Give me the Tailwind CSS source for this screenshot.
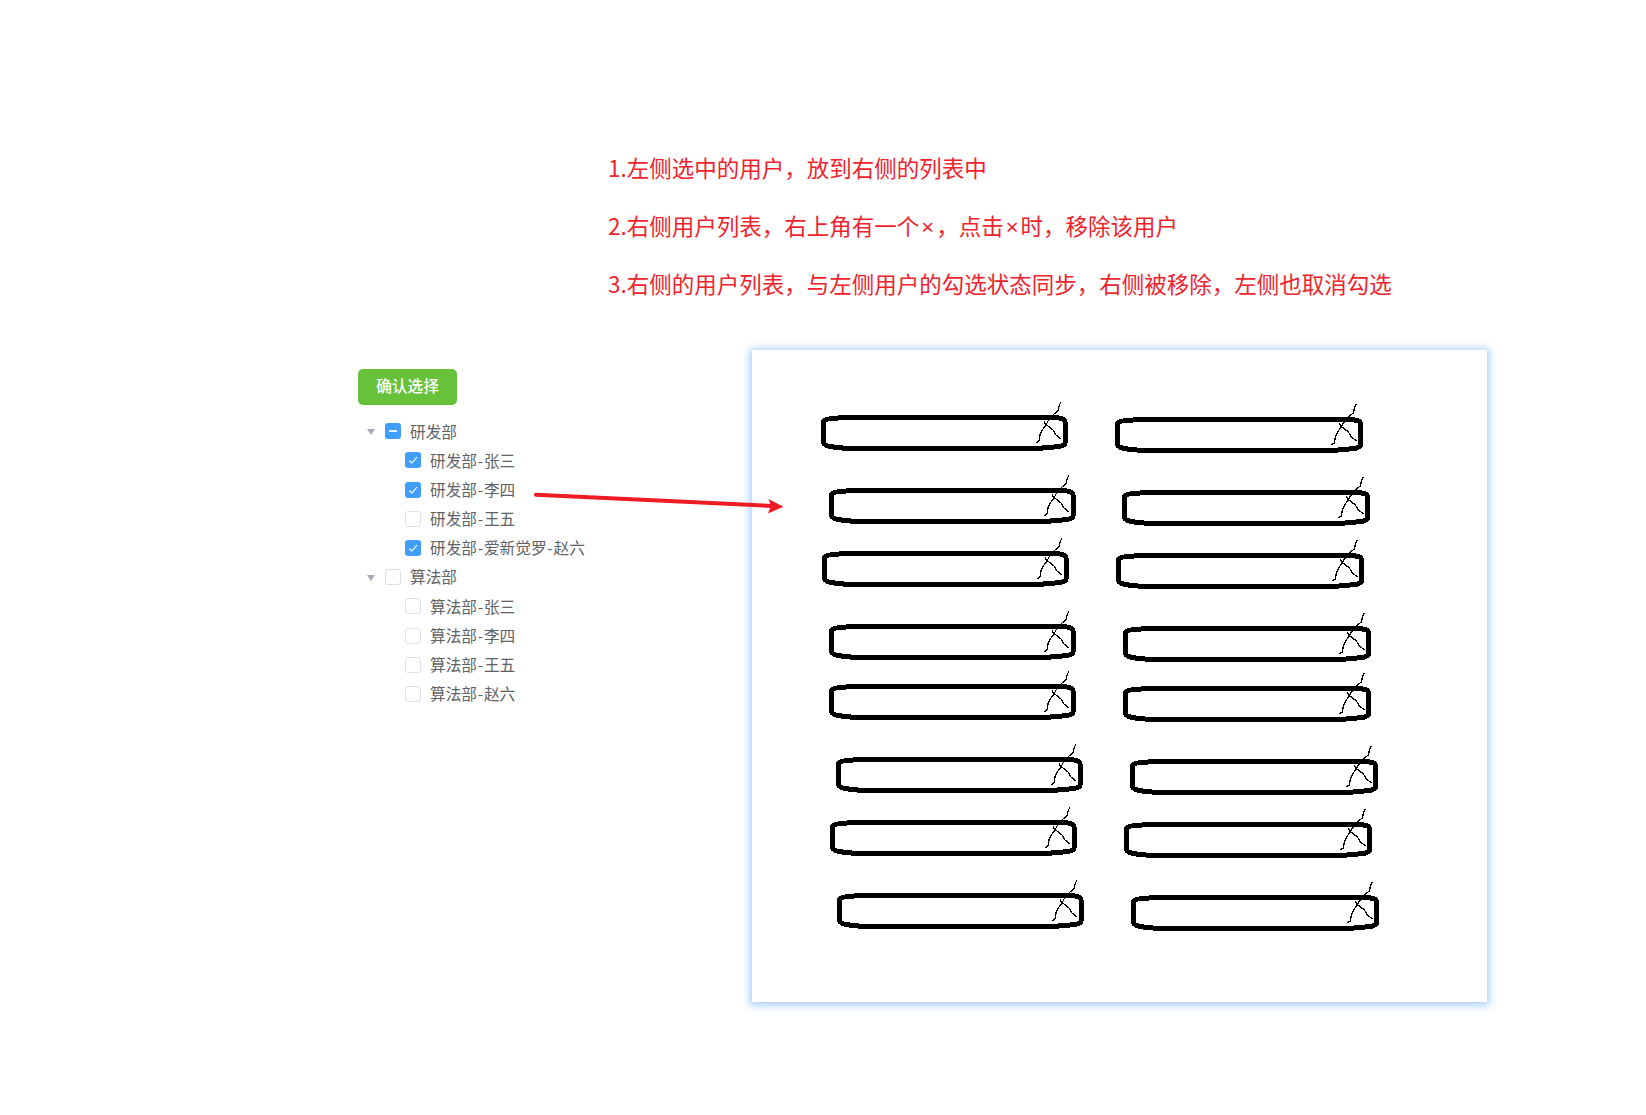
<!DOCTYPE html>
<html lang="zh">
<head>
    <meta charset="UTF-8">
    <meta name="viewport" content="width=device-width, initial-scale=1.0">
    <title>用户选择</title>
    <script src="https://cdn.jsdelivr.net/npm/@tailwindcss/browser@4"></script>
</head>
<body class="bg-white font-['Noto_Sans_CJK_SC','Noto_Sans',sans-serif]">
<div class="relative w-[1646px] h-[1115px] overflow-hidden">
    <!-- 需求说明 -->
    <div class="h-[350px] pt-[139px] pl-[608px] text-[22.5px] leading-[57.6px] text-[#f0232d]">
        <p>1.左侧选中的用户，放到右侧的列表中</p>
        <p>2.右侧用户列表，右上角有一个<span class="px-[2px] font-['Noto_Sans']">×</span>，点击<span class="px-[2px] font-['Noto_Sans']">×</span>时，移除该用户</p>
        <p>3.右侧的用户列表，与左侧用户的勾选状态同步，右侧被移除，左侧也取消勾选</p>
    </div>

    <div class="flex items-start">
        <!-- 左侧树 -->
        <div class="w-[752px] pl-[358px] pt-[19px] text-[15.7px] text-[#606266]">
            <button class="w-[99px] h-[36px] pb-[2px] rounded-[5px] bg-[#67c23a] text-white text-[15.7px] font-medium">确认选择</button>
            <div class="mt-[11.7px]">
                <div class="flex items-center h-[29.2px]">
                    <span class="w-[27px] flex pl-[9px] pt-[2px]"><span class="w-0 h-0 border-x-[4.5px] border-x-transparent border-t-[6px] border-t-[#a8abb2]"></span></span>
                    <span class="w-4 h-4 rounded-[3px] bg-[#409eff] flex items-center justify-center"><span class="w-[8px] h-[2px] bg-white/90"></span></span>
                    <span class="ml-[9px]">研发部</span>
                </div>
                <div class="flex items-center h-[29.2px] pl-[47px]">
                    <span class="w-4 h-4 rounded-[3px] bg-[#409eff] flex items-center justify-center"><svg class="w-[10px] h-[10px]" viewBox="0 0 10 10" fill="none" stroke="#fff" stroke-width="1.1"><path d="M1.2 5.5 4 8 8.8 2.2"/></svg></span>
                    <span class="ml-[9px]">研发部<span class="px-[0.7px]">-</span>张三</span>
                </div>
                <div class="flex items-center h-[29.2px] pl-[47px]">
                    <span class="w-4 h-4 rounded-[3px] bg-[#409eff] flex items-center justify-center"><svg class="w-[10px] h-[10px]" viewBox="0 0 10 10" fill="none" stroke="#fff" stroke-width="1.1"><path d="M1.2 5.5 4 8 8.8 2.2"/></svg></span>
                    <span class="ml-[9px]">研发部<span class="px-[0.7px]">-</span>李四</span>
                </div>
                <div class="flex items-center h-[29.2px] pl-[47px]">
                    <span class="w-4 h-4 rounded-[3px] bg-white border border-[#dcdfe6]"></span>
                    <span class="ml-[9px]">研发部<span class="px-[0.7px]">-</span>王五</span>
                </div>
                <div class="flex items-center h-[29.2px] pl-[47px]">
                    <span class="w-4 h-4 rounded-[3px] bg-[#409eff] flex items-center justify-center"><svg class="w-[10px] h-[10px]" viewBox="0 0 10 10" fill="none" stroke="#fff" stroke-width="1.1"><path d="M1.2 5.5 4 8 8.8 2.2"/></svg></span>
                    <span class="ml-[9px]">研发部<span class="px-[0.7px]">-</span>爱新觉罗<span class="px-[0.7px]">-</span>赵六</span>
                </div>
                <div class="flex items-center h-[29.2px]">
                    <span class="w-[27px] flex pl-[9px] pt-[2px]"><span class="w-0 h-0 border-x-[4.5px] border-x-transparent border-t-[6px] border-t-[#a8abb2]"></span></span>
                    <span class="w-4 h-4 rounded-[3px] bg-white border border-[#dcdfe6]"></span>
                    <span class="ml-[9px]">算法部</span>
                </div>
                <div class="flex items-center h-[29.2px] pl-[47px]">
                    <span class="w-4 h-4 rounded-[3px] bg-white border border-[#dcdfe6]"></span>
                    <span class="ml-[9px]">算法部<span class="px-[0.7px]">-</span>张三</span>
                </div>
                <div class="flex items-center h-[29.2px] pl-[47px]">
                    <span class="w-4 h-4 rounded-[3px] bg-white border border-[#dcdfe6]"></span>
                    <span class="ml-[9px]">算法部<span class="px-[0.7px]">-</span>李四</span>
                </div>
                <div class="flex items-center h-[29.2px] pl-[47px]">
                    <span class="w-4 h-4 rounded-[3px] bg-white border border-[#dcdfe6]"></span>
                    <span class="ml-[9px]">算法部<span class="px-[0.7px]">-</span>王五</span>
                </div>
                <div class="flex items-center h-[29.2px] pl-[47px]">
                    <span class="w-4 h-4 rounded-[3px] bg-white border border-[#dcdfe6]"></span>
                    <span class="ml-[9px]">算法部<span class="px-[0.7px]">-</span>赵六</span>
                </div>
            </div>
        </div>

        <!-- 右侧手绘草图 -->
        <div class="w-[735px] h-[652px] bg-white shadow-[0_1px_8px_2px_rgba(70,150,250,0.5)]">
            <svg width="735" height="652" viewBox="752 350 735 652" fill="none" stroke="#000" shape-rendering="crispEdges">
                <defs>
                    <g id="sketch">
                        <path stroke-width="5" d="M2.5 7C2.5 4 9 3.5 25 2.5H208L212 2 217 2.5 225 2.5 238 3C242 3.5 244 5 244 7V28C244 30 241 31 238 31.5L228 32.5 215 33.5H28L15 32.5 7 31C4 30 2.5 29 2.5 27Z"/>
                        <path stroke-width="1.3" d="M240-13 238-9 237-4 233-1 231 2 227 6 225 10 222 14 219 20 218 26 215 28M223 6 225 10 227 11 232 15 235 20 240 24"/>
                    </g>
                </defs>
                <use href="#sketch" x="821" y="415"/>
                <use href="#sketch" x="829" y="488"/>
                <use href="#sketch" x="822" y="551"/>
                <use href="#sketch" x="829" y="624"/>
                <use href="#sketch" x="829" y="684"/>
                <use href="#sketch" x="836" y="757"/>
                <use href="#sketch" x="830" y="820"/>
                <use href="#sketch" x="837" y="893"/>
                <use href="#sketch" transform="translate(1115 417) scale(1.006 1)"/>
                <use href="#sketch" transform="translate(1122 490) scale(1.006 1)"/>
                <use href="#sketch" transform="translate(1116 553) scale(1.006 1)"/>
                <use href="#sketch" transform="translate(1123 626) scale(1.006 1)"/>
                <use href="#sketch" transform="translate(1123 686) scale(1.006 1)"/>
                <use href="#sketch" transform="translate(1130 759) scale(1.006 1)"/>
                <use href="#sketch" transform="translate(1124 822) scale(1.006 1)"/>
                <use href="#sketch" transform="translate(1131 895) scale(1.006 1)"/>
            </svg>
        </div>
    </div>

    <!-- 红色箭头 -->
    <svg class="absolute left-0 top-0 pointer-events-none" width="1646" height="1115" fill="none">
        <path d="M536 494.7 772 506" stroke="#ed1c24" stroke-width="4" stroke-linecap="round"/>
        <path d="M783.5 506.7 768.5 499 771 506 768 513.5Z" fill="#ed1c24"/>
    </svg>
</div>
</body>
</html>
